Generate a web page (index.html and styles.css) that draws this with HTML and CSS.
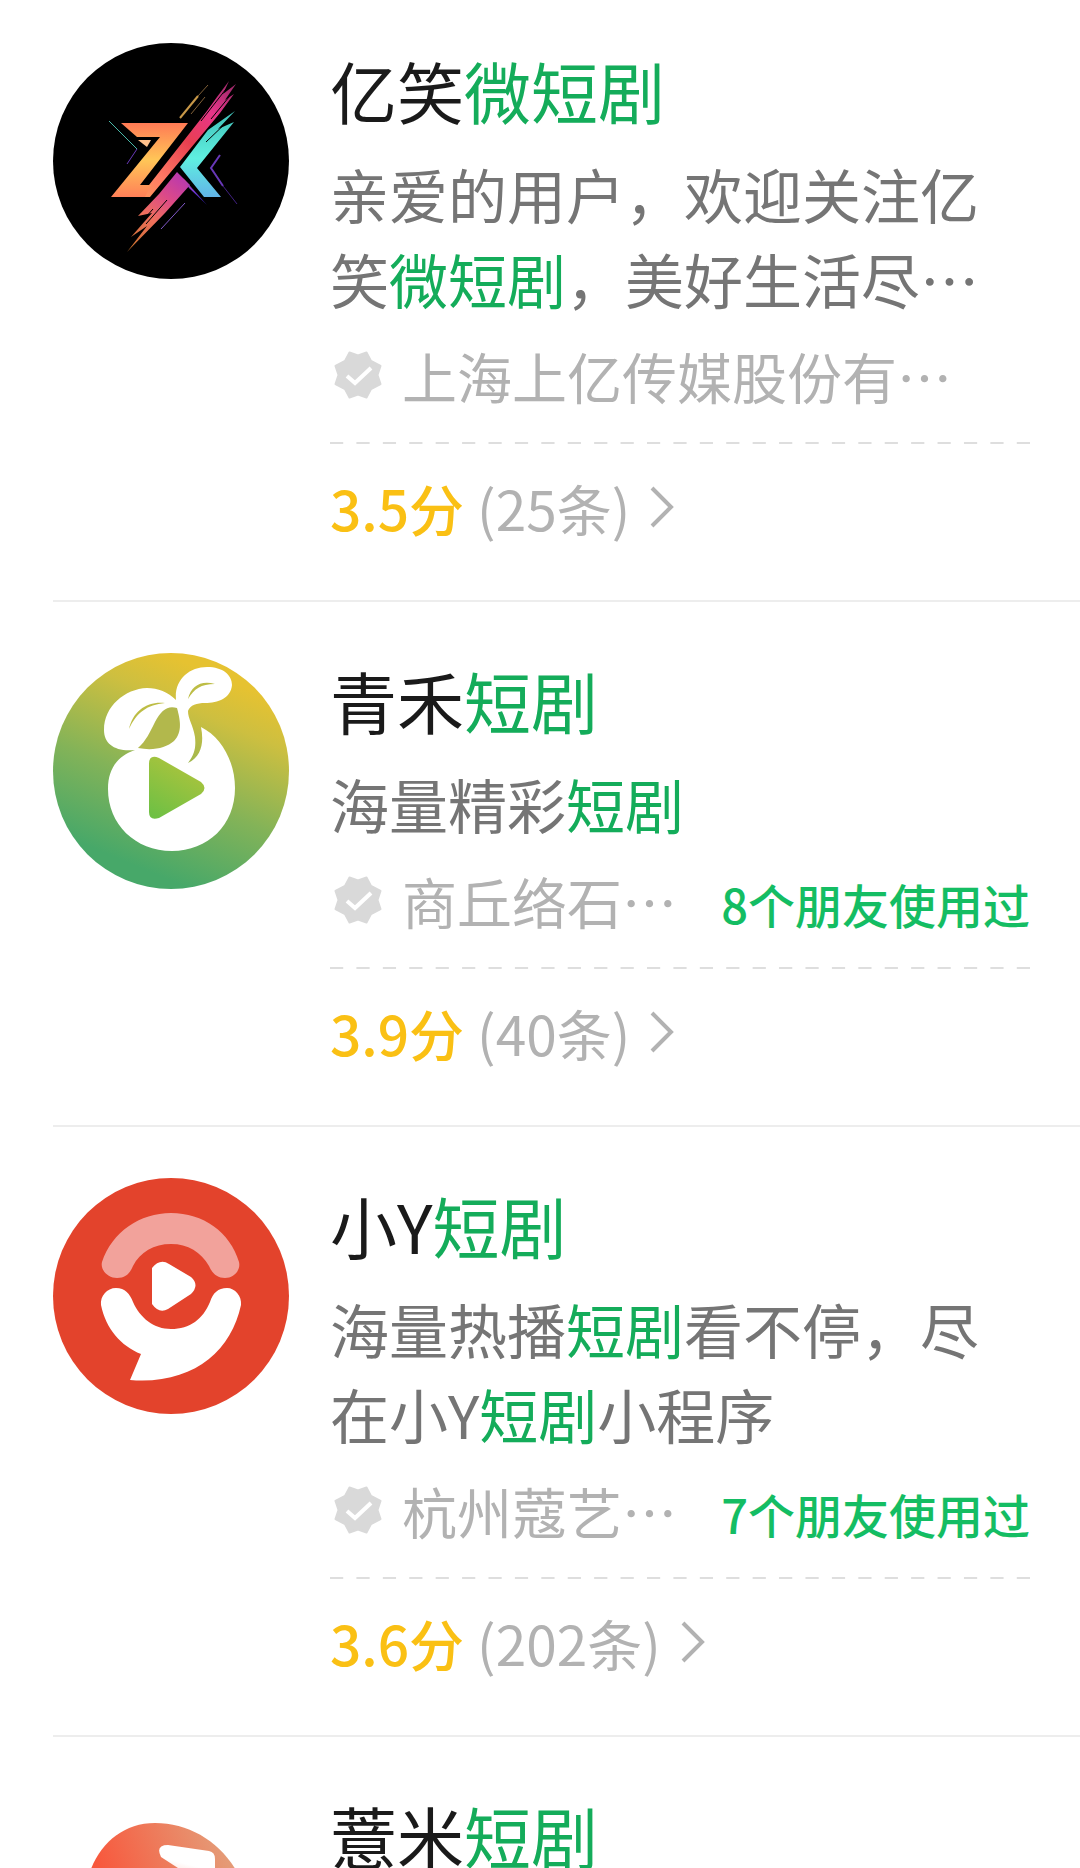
FILE: index.html
```
<!DOCTYPE html>
<html lang="zh-CN">
<head>
<meta charset="utf-8">
<meta name="viewport" content="width=device-width, initial-scale=1">
<title>短剧</title>
<link rel="stylesheet" href="styles.css">
</head>
<body>
<svg class="defs" aria-hidden="true">
  <symbol id="verified" viewBox="0 0 48 48">
    <path fill="#d9d9d9" stroke="#d9d9d9" stroke-width="2" stroke-linejoin="round" d="M15.500 1.500 24 4.500 32.500 1.500 37 10 46.500 15 43.500 24 46.500 33 37 38 32.500 46.500 24 43.500 15.500 46.500 11 38 1.500 33 4.500 24 1.500 15 11 10Z"/>
    <path fill="none" stroke="#fff" stroke-width="4" d="M13 25 21 32 37 17"/>
  </symbol>
  <symbol id="chevron" viewBox="0 0 24 42">
    <path fill="none" stroke="#b2b2b2" stroke-width="4" d="M2 2 21 21 2 40"/>
  </symbol>
</svg>
<main class="results">
  <article class="item">
    <svg class="avatar" viewBox="0 0 236 236" role="img" aria-label="亿笑微短剧">
      <defs>
        <linearGradient id="z" x1="0" y1="0" x2="0" y2="1"><stop offset="0" stop-color="#ff7a55"/><stop offset=".5" stop-color="#ffc657"/><stop offset="1" stop-color="#ff8058"/></linearGradient>
        <linearGradient id="slash" gradientUnits="userSpaceOnUse" x1="182" y1="40" x2="84" y2="154"><stop offset="0" stop-color="#982868"/><stop offset=".25" stop-color="#e8358a"/><stop offset=".5" stop-color="#e83f50"/><stop offset=".8" stop-color="#ff7a64"/><stop offset="1" stop-color="#ff9a5c"/></linearGradient>
        <linearGradient id="tail" gradientUnits="userSpaceOnUse" x1="132" y1="134" x2="78" y2="206"><stop offset="0" stop-color="#b838b0"/><stop offset=".3" stop-color="#dc4a88"/><stop offset=".6" stop-color="#f0705c"/><stop offset="1" stop-color="#c8702c"/></linearGradient>
        <linearGradient id="k" x1="0" y1="0" x2="0" y2="1"><stop offset="0" stop-color="#3fc0b8"/><stop offset=".55" stop-color="#5ff0e0"/><stop offset="1" stop-color="#62b4e8"/></linearGradient>
        <linearGradient id="v" x1="0" y1="0" x2="1" y2="1"><stop offset="0" stop-color="#d84a90"/><stop offset=".5" stop-color="#7038d8"/><stop offset="1" stop-color="#2018a0"/></linearGradient>
      </defs>
      <circle cx="118" cy="118" r="118" fill="#000"/>
      <path fill="url(#slash)" d="M96 142 154 68 164 54 176 38 170 51 183 41 172 57 181 51 167 70 97 154H84L88 142Z"/>
      <path fill="url(#z)" d="M68 80H135L87 142H92L98 142 92 154H58L107 94H84Z"/>
      <path fill="#ffc08a" d="M85 97H98L94 104Z"/>
      <path fill="url(#tail)" d="M124 129 137 142 112 170 74 209 94 183 78 194 99 170 85 173 106 151Z"/>
      <path fill="url(#v)" d="M130 135 154 162 136 145Z"/>
      <path fill="url(#k)" d="M127 124 155 87 182 68 165 86 181 79 144 125 168 154H151Z"/>
      <g fill="none" stroke-width="2">
        <path stroke="#c89848" d="M127 75 145 53"/>
        <path stroke="#806038" stroke-width="1" d="M145 53 155 42M138 71 152 54"/>
        <path stroke="#49b8a8" stroke-width="1" d="M56 78 84 106"/>
        <path stroke="#6838b8" stroke-width="1" d="M84 106 74 121"/>
        <path stroke="#6838b8" d="M167 112 158 125 170 143"/>
        <path stroke="#402080" stroke-width="1" d="M170 143 184 161"/>
        <path stroke="#8058c8" stroke-width="1" d="M132 160 108 186"/>
        <path stroke="#000" stroke-width="1" d="M173 46 148 78M176 54 158 76M176 77 153 99M100 166 84 184M114 157 93 181"/>
      </g>
    </svg>
    <div class="body">
      <h2 class="title">亿笑<em>微短剧</em></h2>
      <p class="desc">亲爱的用户，欢迎关注亿笑<em>微短剧</em>，美好生活尽…</p>
      <div class="meta"><svg class="badge"><use href="#verified"/></svg><span class="company">上海上亿传媒股份有…</span></div>
      <svg class="dash" aria-hidden="true"><line x1="0" y1="1" x2="100%" y2="1" pathLength="53"/></svg>
      <a class="rating" href="#"><span class="score">3.5分</span><span>(25条)</span><svg class="arrow"><use href="#chevron"/></svg></a>
    </div>
  </article>
  <article class="item">
    <svg class="avatar" viewBox="0 0 236 236" role="img" aria-label="青禾短剧">
      <defs>
        <linearGradient id="g" gradientUnits="userSpaceOnUse" x1="170" y1="25" x2="90" y2="216"><stop offset="0" stop-color="#e6c231"/><stop offset=".2" stop-color="#cdbf40"/><stop offset=".6" stop-color="#83b358"/><stop offset="1" stop-color="#47a869"/></linearGradient>
        <linearGradient id="p" x1=".7" y1="0" x2=".2" y2="1"><stop offset="0" stop-color="#b0c43c"/><stop offset="1" stop-color="#6fc044"/></linearGradient>
      </defs>
      <circle cx="118" cy="118" r="118" fill="url(#g)"/>
      <path fill="#fff" d="M123 47C121 27 136 14 154 14 170 14 179 22 179 32 178 45 165 50 152 50 144 50 137 52 135 58 135 66 140 72 142 84 143 94 142 101 135 110 149 103 151 89 148 74 168 84 182 108 182 135 182 172 155 198 119 198 82 198 55 171 55 136 55 115 65 103 82 97 62 99 51 91 51 77 51 53 72 36 94 35 105 35 115 39 123 47Z"/>
      <path fill="#b2b84c" d="M124 55C115 52 108 57 102 69 97 79 93 88 85 95 100 98 113 95 121 88 130 79 127 66 124 55Z"/>
      <path fill="#bdbd45" d="M76 76C80 58 94 48 112 50 94 52 84 59 76 76ZM135 46C138 33 148 27 162 31 148 31 141 36 135 46Z"/>
      <path fill="url(#p)" d="M96 111Q96 101 106 105L148 129Q155 135 148 141L106 165Q96 168 96 159Z"/>
    </svg>
    <div class="body">
      <h2 class="title">青禾<em>短剧</em></h2>
      <p class="desc">海量精彩<em>短剧</em></p>
      <div class="meta"><svg class="badge"><use href="#verified"/></svg><span class="company">商丘络石…</span><span class="friends">8个朋友使用过</span></div>
      <svg class="dash" aria-hidden="true"><line x1="0" y1="1" x2="100%" y2="1" pathLength="53"/></svg>
      <a class="rating" href="#"><span class="score">3.9分</span><span>(40条)</span><svg class="arrow"><use href="#chevron"/></svg></a>
    </div>
  </article>
  <article class="item">
    <svg class="avatar" viewBox="0 0 236 236" role="img" aria-label="小Y短剧">
      <circle cx="118" cy="118" r="118" fill="#e3432c"/>
      <path fill="#f2a29b" d="M49 84C59 54 87 35 118 35 150 35 177 54 186 84 188 92 181 100 172 100 164 100 159 95 156 88 148 74 135 66 118 66 101 66 87 74 80 88 77 95 73 100 64 100 55 100 47 92 49 84Z"/>
      <path fill="#fff" d="M63 110C72 110 77 116 80 124 87 140 101 151 118 151 137 151 150 141 157 124 160 115 165 110 174 110 182 110 189 118 188 127 178 174 139 207 77 202L88 176C68 168 53 151 48 127 47 118 54 110 63 110Z"/>
      <path fill="#fff" d="M99 90Q107 80 116 86L138 99Q147 107 138 116L115 131Q106 136 99 126Z"/>
    </svg>
    <div class="body">
      <h2 class="title">小Y<em>短剧</em></h2>
      <p class="desc">海量热播<em>短剧</em>看不停，尽在小Y<em>短剧</em>小程序</p>
      <div class="meta"><svg class="badge"><use href="#verified"/></svg><span class="company">杭州蔻艺…</span><span class="friends">7个朋友使用过</span></div>
      <svg class="dash" aria-hidden="true"><line x1="0" y1="1" x2="100%" y2="1" pathLength="53"/></svg>
      <a class="rating" href="#"><span class="score">3.6分</span><span>(202条)</span><svg class="arrow"><use href="#chevron"/></svg></a>
    </div>
  </article>
  <article class="item">
    <svg class="avatar" viewBox="0 0 236 236" role="img" aria-label="薏米短剧">
      <defs>
        <linearGradient id="r" gradientUnits="userSpaceOnUse" x1="50" y1="95" x2="165" y2="50"><stop offset="0" stop-color="#f8573c"/><stop offset="1" stop-color="#e59a76"/></linearGradient>
        <linearGradient id="w" x1=".6" y1="0" x2=".3" y2="1"><stop offset=".4" stop-color="#fff"/><stop offset="1" stop-color="#ffb8a4"/></linearGradient>
      </defs>
      <path fill="url(#r)" d="M32 110C34 68 62 35 102 35 140 35 174 58 190 96V236H32Z"/>
      <path fill="url(#w)" d="M108 69Q102 57 115 57L156 63Q162 64 162 71V104Z"/>
    </svg>
    <div class="body">
      <h2 class="title">薏米<em>短剧</em></h2>
    </div>
  </article>
</main>
</body>
</html>
```
FILE: styles.css
```
* {
  box-sizing: border-box;
}

html {
  overflow: hidden;
}

body {
  margin: 0;
  height: 100vh;
  overflow: hidden;
  background: #fff;
  color: #b2b2b2;
  font-family: "Noto Sans CJK SC", sans-serif;
  font-size: 55px;
  line-height: 66px;
}

.defs {
  display: none;
}

.results {
  padding-left: 53px;
}

.item {
  display: flex;
  gap: 41px;
  padding: 51px 50px 60px 0;
  border-bottom: 2px solid #ededed;
}

.item:first-child {
  padding-top: 43px;
}

.avatar {
  flex: none;
  width: 236px;
  height: 236px;
}

.body {
  flex: 1;
  min-width: 0;
}

em {
  color: #14ac5a;
  font-style: normal;
}

.title {
  margin: 0 0 14px;
  color: #1a1a1a;
  font-size: 67px;
  font-weight: 400;
  line-height: 94px;
}

.desc {
  margin: 0 0 21px;
  color: #757575;
  font-size: 59px;
  line-height: 85px;
}

.meta {
  display: flex;
  align-items: baseline;
  height: 66px;
}

.badge {
  flex: none;
  align-self: center;
  width: 48px;
  height: 48px;
  margin: 0 20px 0 4px;
}

.company {
  white-space: nowrap;
}

.friends {
  margin-left: auto;
  color: #14bd63;
  font-size: 47px;
  font-weight: 500;
  white-space: nowrap;
}

.dash {
  display: block;
  width: 100%;
  height: 2px;
  margin: 34px 0 30px;
}

.dash line {
  stroke: #dedede;
  stroke-width: 2px;
  stroke-dasharray: 1 1;
}

.rating {
  display: flex;
  align-items: center;
  gap: 13px;
  color: inherit;
  text-decoration: none;
}

.score {
  color: #fac014;
  font-weight: 500;
}

.arrow {
  width: 24px;
  height: 42px;
  margin-left: 7px;
}
```
